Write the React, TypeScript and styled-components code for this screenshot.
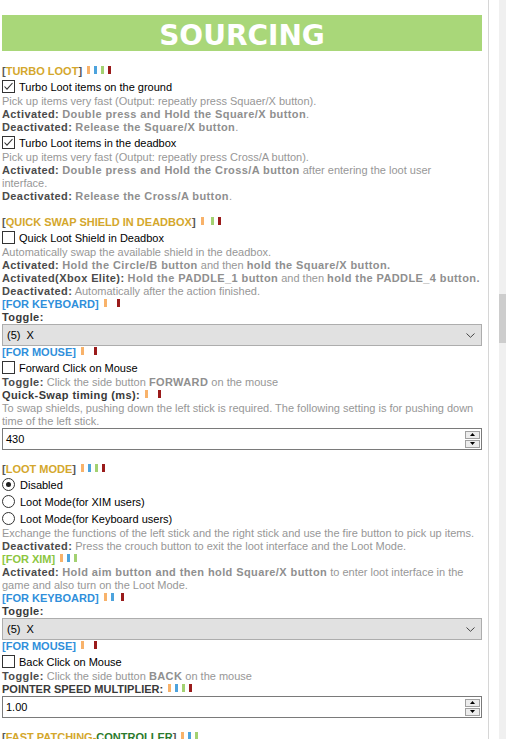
import React from "react"
import styled, { createGlobalStyle } from "styled-components"

const GlobalStyle = createGlobalStyle`
  html, body {
    margin: 0;
    padding: 0;
    overflow: hidden;
    background: #fff;
  }
  body {
    font-family: "Liberation Sans", Arial, sans-serif;
  }
`

const GOLD = "#d4a72c"
const BLUE = "#2f8fdb"
const XIM_GREEN = "#8cc63f"
const DARK_GREEN = "#2a7a2c"

const SLOT_COLORS: Record<string, string> = {
  o: "#f8b26a",
  b: "#4da3dd",
  g: "#a3d171",
  r: "#9a1b1b",
}

const Page = styled.div`
  display: flex;
  width: 506px;
  height: 739px;
  overflow: hidden;
`

const Panel = styled.div`
  width: 480px;
  flex-shrink: 0;
  padding: 15px 6px 0 2px;
  border-right: 1px solid #d6d6d6;
`

const Gutter = styled.div`
  flex: 1;
`

const Track = styled.div`
  width: 7px;
  background: #f0f0f0;
`

const Thumb = styled.div`
  margin-top: 294px;
  height: 49px;
  background: #cdcdcd;
`

const Banner = styled.div`
  height: 36px;
  box-sizing: border-box;
  padding-top: 4px;
  margin-bottom: 14px;
  background: #a9d779;
  color: #fff;
  font-family: "DejaVu Sans", Verdana, sans-serif;
  font-weight: bold;
  font-size: 28px;
  display: flex;
  align-items: center;
  justify-content: center;
`

const Heading = styled.div`
  font-size: 11px;
  line-height: 13px;
  font-weight: bold;
  color: #555;
`

const Tag = styled.span<{ $color: string }>`
  color: ${(p) => p.$color};
`

const BarGroup = styled.span`
  margin-left: 5px;
`

const Slot = styled.span<{ $color?: string }>`
  display: inline-block;
  width: 3px;
  height: 8px;
  vertical-align: 1px;
  margin-right: ${(p) => (p.$color ? 4 : 0)}px;
  background: ${(p) => p.$color ?? "transparent"};
`

const Line = styled.div`
  font-size: 11px;
  line-height: 13px;
  color: #979797;
`

const Key = styled.b`
  color: #4b4b4b;
  letter-spacing: 0.4px;
`

const Val = styled.b`
  color: #8f8f8f;
  letter-spacing: 0.4px;
`

const FieldLabel = styled.div<{ $caps?: boolean }>`
  font-size: 11px;
  line-height: 13px;
  font-weight: bold;
  color: #3a3a3a;
  letter-spacing: ${(p) => (p.$caps ? 0 : 0.4)}px;
`

const Blank = styled.div`
  height: 13px;
`

const OptionRow = styled.label`
  display: flex;
  align-items: center;
  height: 17px;
  font-size: 11px;
  color: #000;
`

const Box = styled.span`
  width: 13px;
  height: 13px;
  box-sizing: border-box;
  border: 1px solid #333;
  background: #fff;
  display: flex;
  align-items: center;
  justify-content: center;
  margin-right: 4px;
`

const Circle = styled.span`
  width: 13px;
  height: 13px;
  box-sizing: border-box;
  border: 1px solid #333;
  border-radius: 50%;
  background: #fff;
  display: flex;
  align-items: center;
  justify-content: center;
  margin-right: 5px;
`

const Dot = styled.span`
  width: 5px;
  height: 5px;
  border-radius: 50%;
  background: #1f1f1f;
`

const Select = styled.div`
  height: 22px;
  box-sizing: border-box;
  border: 1px solid #adadad;
  background: #e1e1e1;
  display: flex;
  align-items: center;
  justify-content: space-between;
  padding: 0 6px 0 4px;
  font-size: 11px;
  color: #000;
  white-space: pre;
`

const SpinBox = styled.div`
  height: 22px;
  box-sizing: border-box;
  border: 1px solid #7a7a7a;
  background: #fff;
  display: flex;
  align-items: center;
  justify-content: space-between;
  padding-left: 3px;
  font-size: 11px;
  color: #000;
`

const SpinButtons = styled.div`
  display: flex;
  flex-direction: column;
  gap: 1px;
  width: 15px;
  margin-right: 1px;
`

const SpinButton = styled.div`
  height: 8px;
  box-sizing: border-box;
  border: 1px solid #a0a0a0;
  background: #ececec;
  display: flex;
  align-items: center;
  justify-content: center;
`

const Bars: React.FC<{ on: string }> = ({ on }) => (
  <BarGroup>
    {on.split("").map((c, i) => (
      <Slot key={i} $color={SLOT_COLORS[c]} />
    ))}
  </BarGroup>
)

const Check: React.FC<{ checked?: boolean; children: React.ReactNode }> = ({ checked, children }) => (
  <OptionRow>
    <Box>
      {checked && (
        <svg width="11" height="11" viewBox="0 0 11 11">
          <polyline points="1.5,5.5 4,8.2 9.5,2" fill="none" stroke="#333" strokeWidth="1.1" />
        </svg>
      )}
    </Box>
    {children}
  </OptionRow>
)

const Radio: React.FC<{ checked?: boolean; children: React.ReactNode }> = ({ checked, children }) => (
  <OptionRow>
    <Circle>{checked && <Dot />}</Circle>
    {children}
  </OptionRow>
)

const Dropdown: React.FC<{ value: string }> = ({ value }) => (
  <Select>
    <span>{value}</span>
    <svg width="9" height="5" viewBox="0 0 9 5">
      <polyline points="0.5,0.5 4.5,4.3 8.5,0.5" fill="none" stroke="#444" strokeWidth="1" />
    </svg>
  </Select>
)

const Spinner: React.FC<{ value: string }> = ({ value }) => (
  <SpinBox>
    <span>{value}</span>
    <SpinButtons>
      <SpinButton>
        <svg width="5" height="3" viewBox="0 0 5 3">
          <polygon points="2.5,0 5,3 0,3" fill="#000" />
        </svg>
      </SpinButton>
      <SpinButton>
        <svg width="5" height="3" viewBox="0 0 5 3">
          <polygon points="0,0 5,0 2.5,3" fill="#000" />
        </svg>
      </SpinButton>
    </SpinButtons>
  </SpinBox>
)

const Section: React.FC<{ title: React.ReactNode; bars: string }> = ({ title, bars }) => (
  <Heading>
    [<Tag $color={GOLD}>{title}</Tag>]
    <Bars on={bars} />
  </Heading>
)

const SubSection: React.FC<{ title: string; color: string; bars: string }> = ({ title, color, bars }) => (
  <Heading>
    <Tag $color={color}>[{title}]</Tag>
    <Bars on={bars} />
  </Heading>
)

export default function App() {
  return (
    <>
      <GlobalStyle />
      <Page>
        <Panel>
          <Banner>SOURCING</Banner>

          <Section title="TURBO LOOT" bars="obgr" />
          <Check checked>Turbo Loot items on the ground</Check>
          <Line>Pick up items very fast (Output: repeatly press Squaer/X button).</Line>
          <Line>
            <Key>Activated:</Key> <Val>Double press and Hold the Square/X button</Val>.
          </Line>
          <Line>
            <Key>Deactivated:</Key> <Val>Release the Square/X button</Val>.
          </Line>
          <Check checked>Turbo Loot items in the deadbox</Check>
          <Line>Pick up items very fast (Output: repeatly press Cross/A button).</Line>
          <Line>
            <Key>Activated:</Key> <Val>Double press and Hold the Cross/A button</Val> after entering the loot user
            <br />
            interface.
          </Line>
          <Line>
            <Key>Deactivated:</Key> <Val>Release the Cross/A button</Val>.
          </Line>
          <Blank />

          <Section title="QUICK SWAP SHIELD IN DEADBOX" bars="o-gr" />
          <Check>Quick Loot Shield in Deadbox</Check>
          <Line>Automatically swap the available shield in the deadbox.</Line>
          <Line>
            <Key>Activated:</Key> <Val>Hold the Circle/B button</Val> and then <Val>hold the Square/X button.</Val>
          </Line>
          <Line>
            <Key>Activated(Xbox Elite):</Key> <Val>Hold the PADDLE_1 button</Val> and then{" "}
            <Val>hold the PADDLE_4 button.</Val>
          </Line>
          <Line>
            <Key>Deactivated:</Key> Automatically after the action finished.
          </Line>
          <SubSection title="FOR KEYBOARD" color={BLUE} bars="o--r" />
          <FieldLabel>Toggle:</FieldLabel>
          <Dropdown value="(5)  X" />
          <SubSection title="FOR MOUSE" color={BLUE} bars="o--r" />
          <Check>Forward Click on Mouse</Check>
          <Line>
            <Key>Toggle:</Key> Click the side button <Val>FORWARD</Val> on the mouse
          </Line>
          <FieldLabel>
            Quick-Swap timing (ms):
            <Bars on="o--r" />
          </FieldLabel>
          <Line>
            To swap shields, pushing down the left stick is required. The following setting is for pushing down
            <br />
            time of the left stick.
          </Line>
          <Spinner value="430" />
          <Blank />

          <Section title="LOOT MODE" bars="obgr" />
          <Radio checked>Disabled</Radio>
          <Radio>Loot Mode(for XIM users)</Radio>
          <Radio>Loot Mode(for Keyboard users)</Radio>
          <Line>
            Exchange the functions of the left stick and the right stick and use the fire button to pick up items.
          </Line>
          <Line>
            <Key>Deactivated:</Key> Press the crouch button to exit the loot interface and the Loot Mode.
          </Line>
          <SubSection title="FOR XIM" color={XIM_GREEN} bars="obg-" />
          <Line>
            <Key>Activated:</Key> <Val>Hold aim button and then hold Square/X button</Val> to enter loot interface in
            the
            <br />
            game and also turn on the Loot Mode.
          </Line>
          <SubSection title="FOR KEYBOARD" color={BLUE} bars="ob-r" />
          <FieldLabel>Toggle:</FieldLabel>
          <Dropdown value="(5)  X" />
          <SubSection title="FOR MOUSE" color={BLUE} bars="o--r" />
          <Check>Back Click on Mouse</Check>
          <Line>
            <Key>Toggle:</Key> Click the side button <Val>BACK</Val> on the mouse
          </Line>
          <FieldLabel $caps>
            POINTER SPEED MULTIPLIER:
            <Bars on="obgr" />
          </FieldLabel>
          <Spinner value="1.00" />
          <Blank />

          <Heading>
            [<Tag $color={GOLD}>FAST PATCHING-</Tag>
            <Tag $color={DARK_GREEN}>CONTROLLER</Tag>]
            <Bars on="obg-" />
          </Heading>
        </Panel>
        <Gutter />
        <Track>
          <Thumb />
        </Track>
      </Page>
    </>
  )
}
